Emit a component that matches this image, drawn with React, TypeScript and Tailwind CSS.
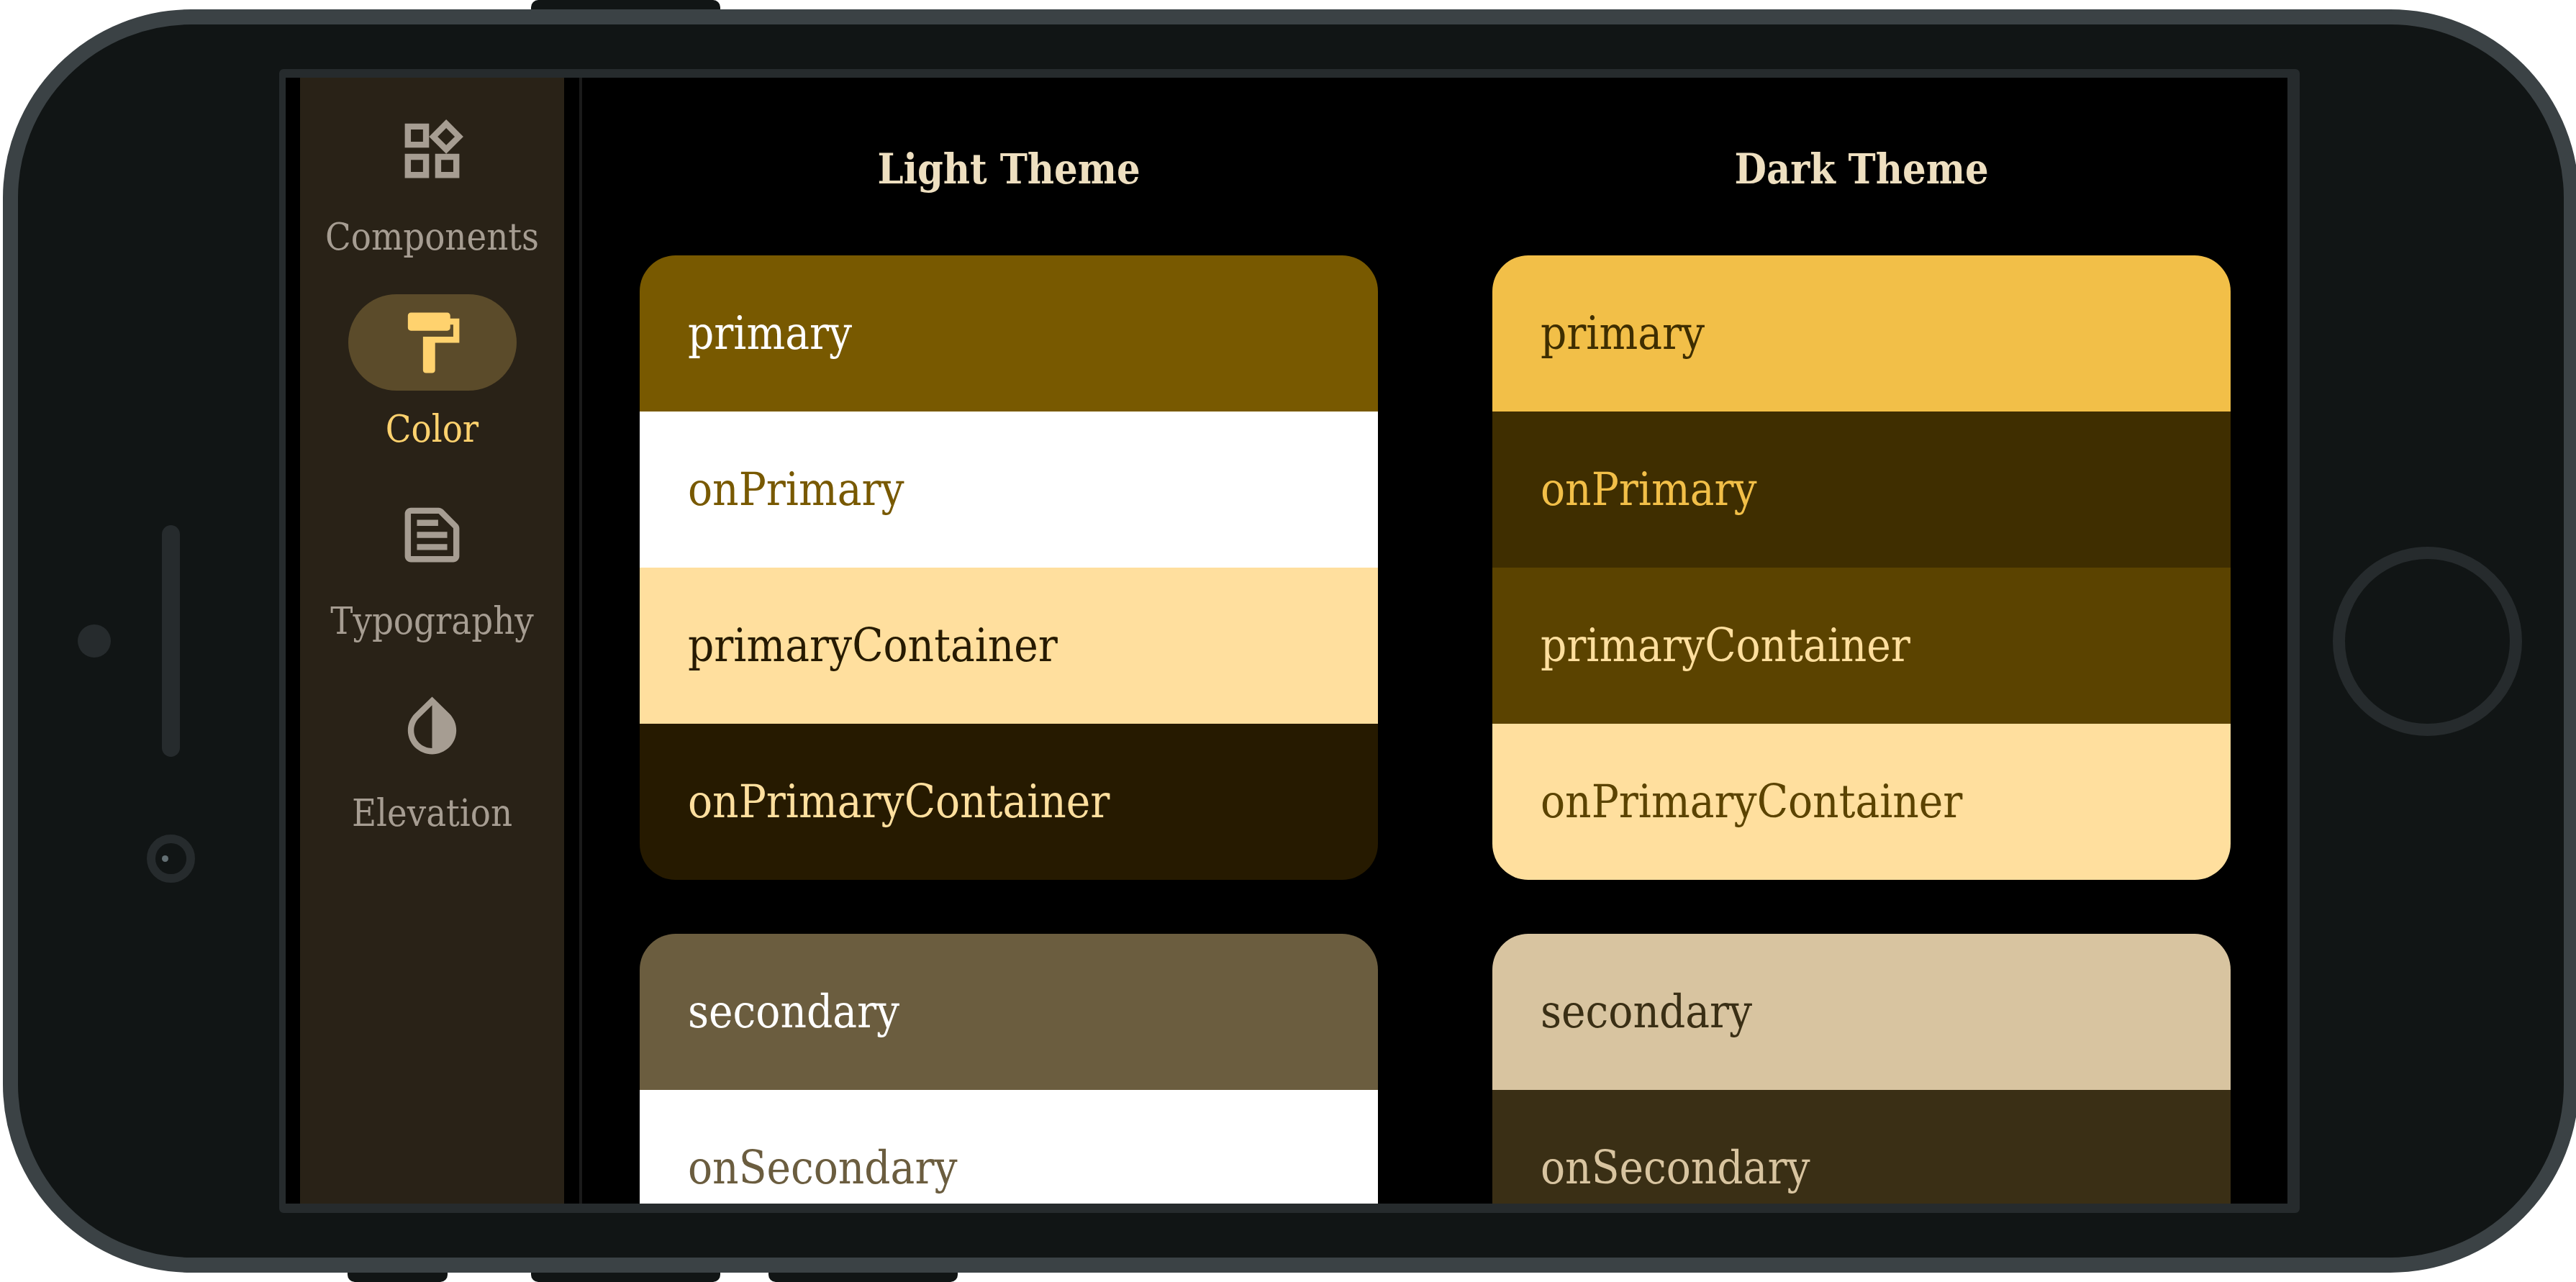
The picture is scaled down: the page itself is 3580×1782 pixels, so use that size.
import type { IconType } from "react-icons";
import {
  MdFormatPaint,
  MdInvertColors,
  MdOutlineTextSnippet,
  MdOutlineWidgets,
} from "react-icons/md";

type NavItem = { label: string; icon: IconType; active?: boolean };
type Swatch = { name: string; style: string };
type Theme = { title: string; groups: Swatch[][] };

const navItems: NavItem[] = [
  { label: "Components", icon: MdOutlineWidgets },
  { label: "Color", icon: MdFormatPaint, active: true },
  { label: "Typography", icon: MdOutlineTextSnippet },
  { label: "Elevation", icon: MdInvertColors },
];

const themes: Theme[] = [
  {
    title: "Light Theme",
    groups: [
      [
        { name: "primary", style: "bg-[#785900] text-white" },
        { name: "onPrimary", style: "bg-white text-[#785900]" },
        { name: "primaryContainer", style: "bg-[#ffdf9e] text-[#261a00]" },
        { name: "onPrimaryContainer", style: "bg-[#261a00] text-[#ffdf9e]" },
      ],
      [
        { name: "secondary", style: "bg-[#6b5d3f] text-white" },
        { name: "onSecondary", style: "bg-white text-[#6b5d3f]" },
      ],
    ],
  },
  {
    title: "Dark Theme",
    groups: [
      [
        { name: "primary", style: "bg-[#f2bf48] text-[#3f2e00]" },
        { name: "onPrimary", style: "bg-[#3f2e00] text-[#f2bf48]" },
        { name: "primaryContainer", style: "bg-[#5b4300] text-[#ffdf9e]" },
        { name: "onPrimaryContainer", style: "bg-[#ffdf9e] text-[#5b4300]" },
      ],
      [
        { name: "secondary", style: "bg-[#d8c4a0] text-[#3a2f15]" },
        { name: "onSecondary", style: "bg-[#3a2f15] text-[#d8c4a0]" },
      ],
    ],
  },
];

function NavButton({ label, icon: Icon, active }: NavItem) {
  return (
    <button
      type="button"
      aria-current={active ? "page" : undefined}
      className={`flex h-[267px] w-full flex-col items-center ${active ? "text-[#ffd26e]" : "text-[#a69d92]"}`}
    >
      <span
        className={`flex h-[134px] w-[234px] items-center justify-center rounded-full ${active ? "bg-[#5b4b2a]" : ""}`}
      >
        <Icon size={101} />
      </span>
      <span className="text-[52px] leading-[106px]">{label}</span>
    </button>
  );
}

function ThemeColumn({ title, groups }: Theme) {
  return (
    <section className="pt-3 pr-[79px] pl-20">
      <h2 className="mb-1.5 text-center text-[57px] leading-[229px] font-bold text-[#eedfc0]">
        {title}
      </h2>
      <div className="flex flex-col gap-[75px]">
        {groups.map((group) => (
          <ul key={group[0].name} className="overflow-hidden rounded-[50px]">
            {group.map((swatch) => (
              <li
                key={swatch.name}
                className={`px-[67px] text-[63px] leading-[217px] ${swatch.style}`}
              >
                {swatch.name}
              </li>
            ))}
          </ul>
        ))}
      </div>
    </section>
  );
}

function FrontSensors() {
  return (
    <div className="flex w-[363px] shrink-0 items-center gap-[50px] pl-[83px]">
      <div className="size-[46px] rounded-full bg-[#262b2d]" />
      <div className="grid h-full grid-rows-[1fr_auto_1fr] justify-items-center">
        <div className="row-start-2 h-[322px] w-[25px] rounded-full bg-[#262b2d]" />
        <div className="row-start-3 mt-[108px] flex size-[67px] items-center rounded-full border-[12px] border-[#262b2d] pl-[9px]">
          <div className="size-[9px] rounded-full bg-[#636f73]" />
        </div>
      </div>
    </div>
  );
}

export default function App() {
  return (
    <div className="flex h-screen flex-col overflow-hidden bg-white font-['Roboto_Slab','DejaVu_Serif_Condensed','DejaVu_Serif',serif]">
      <div className="h-[13px] shrink-0 pl-[738px]">
        <div className="h-full w-[263px] rounded-t-[10px] bg-[#111515]" />
      </div>

      <div className="-mr-1 ml-1 flex min-h-0 flex-1 rounded-[262px] border-[21px] border-[#3b4245] bg-[#111515]">
        <FrontSensors />

        <div className="my-[62px] flex min-w-0 flex-1 overflow-hidden rounded-[6px] border-t-[12px] border-r-[17px] border-b-[13px] border-l-[9px] border-[#262b2d] bg-black">
          <nav className="ml-5 w-[367px] shrink-0 bg-[#292217] pt-[34px]">
            {navItems.map((item) => (
              <NavButton key={item.label} {...item} />
            ))}
          </nav>
          <main className="ml-[21px] grid flex-1 grid-cols-2 border-l-4 border-[#1a1a1a]">
            {themes.map((theme) => (
              <ThemeColumn key={theme.title} {...theme} />
            ))}
          </main>
        </div>

        <div className="flex w-[367px] shrink-0 items-center pl-[46px]">
          <button
            type="button"
            aria-label="Home"
            className="size-[263px] rounded-full border-[17px] border-[#262b2d]"
          />
        </div>
      </div>

      <div className="flex h-[13px] shrink-0 pl-[483px]">
        <div className="w-[139px] rounded-b-[10px] bg-[#111515]" />
        <div className="ml-[116px] w-[263px] rounded-b-[10px] bg-[#111515]" />
        <div className="ml-[67px] w-[263px] rounded-b-[10px] bg-[#111515]" />
      </div>
    </div>
  );
}
